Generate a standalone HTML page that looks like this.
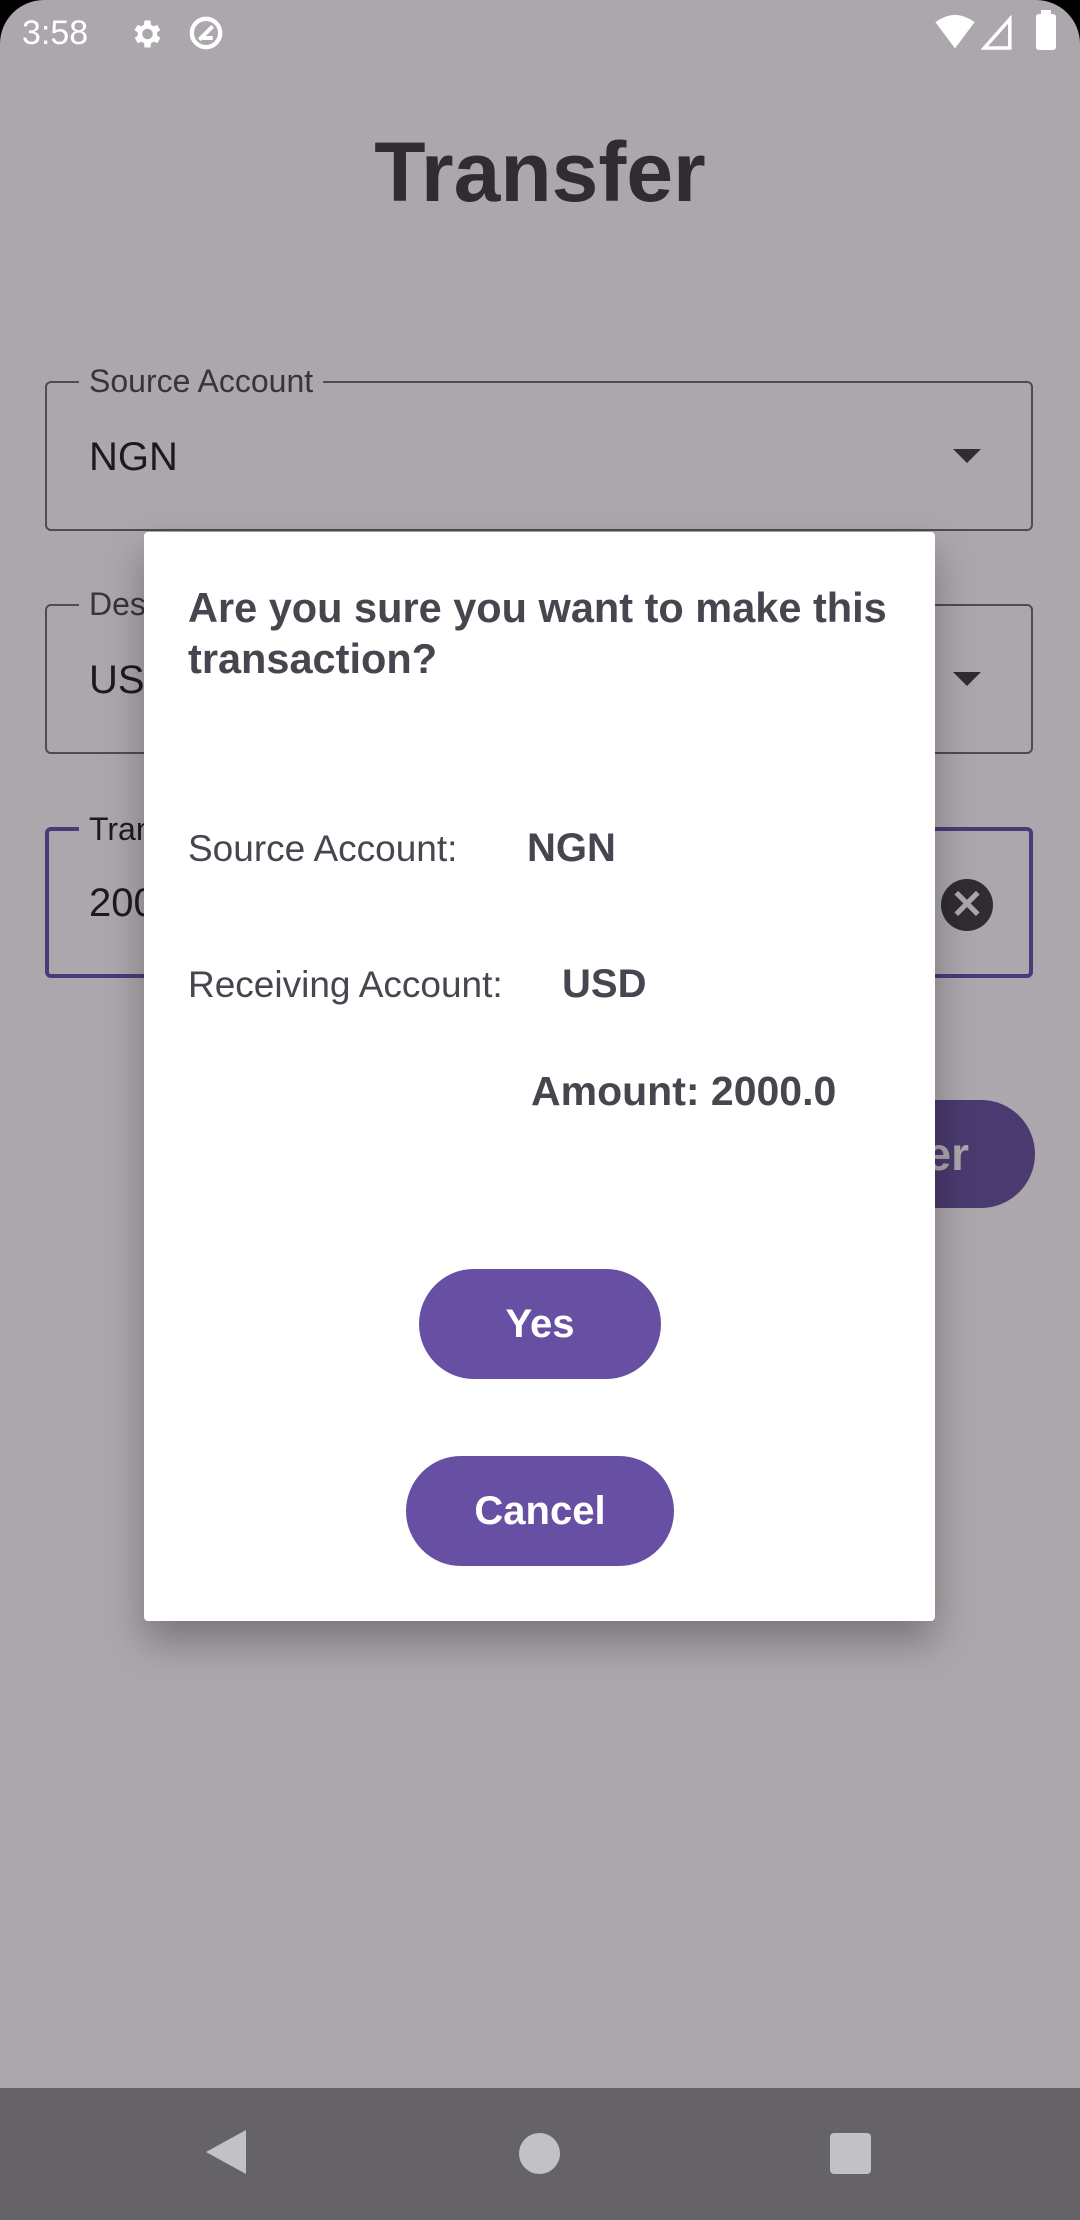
<!DOCTYPE html>
<html><head><meta charset="utf-8"><style>
html,body{margin:0;padding:0;}
body{width:1080px;height:2220px;position:relative;overflow:hidden;background:#000;font-family:"Liberation Sans",Roboto,sans-serif;}
.screen{position:absolute;left:0;top:0;width:1080px;height:2220px;background:#aca7ad;border-radius:44px 44px 0 0;overflow:hidden;}
.abs{position:absolute;}
.field{position:absolute;left:45px;width:988px;border:2px solid #4f4b53;border-radius:6px;box-sizing:border-box;}
.lbl{position:absolute;top:-21px;left:32px;padding:0 10px;background:#aca7ad;font-size:32px;color:#38343c;line-height:38px;}
.val{position:absolute;left:42px;font-size:40px;color:#1c1a1f;}
.arrow{position:absolute;right:50px;width:0;height:0;border-left:14px solid transparent;border-right:14px solid transparent;border-top:14px solid #2f2c33;}
.btn{position:absolute;background:#6750a4;color:#fff;font-weight:bold;font-size:40px;text-align:center;border-radius:60px;}
.dlg{position:absolute;left:144px;top:532px;width:791px;height:1089px;background:#fff;border-radius:4px;box-shadow:0 20px 40px rgba(0,0,0,0.3);}
.t{position:absolute;color:#49454f;}
</style></head><body>
<div class="screen">
  <div class="abs" style="left:22px;top:14px;font-size:34px;color:#fff;">3:58</div>
  <svg class="abs" style="left:128px;top:16px" width="36" height="36" viewBox="0 0 24 24"><path fill="#fff" d="M19.4 13a7.5 7.5 0 000-2l2.1-1.6-2-3.5-2.5 1a7 7 0 00-1.7-1L15 3h-4l-.4 2.9a7 7 0 00-1.7 1l-2.5-1-2 3.5L6.6 11a7.5 7.5 0 000 2l-2.1 1.6 2 3.5 2.5-1a7 7 0 001.7 1L11 21h4l.4-2.9a7 7 0 001.7-1l2.5 1 2-3.5zM13 15.5a3.5 3.5 0 110-7 3.5 3.5 0 010 7z"/></svg>
  <svg class="abs" style="left:186px;top:13px" width="40" height="40" viewBox="0 0 24 24"><circle cx="12" cy="12" r="8.5" fill="none" stroke="#fff" stroke-width="2.6"/><path d="M8 16L16 8M10 15h6" stroke="#fff" stroke-width="2.4" fill="none"/></svg>
  <svg class="abs" style="left:935px;top:14px" width="40" height="36" viewBox="0 0 24 22"><path fill="#fff" d="M12 21L0 5Q12-4 24 5z"/></svg>
  <svg class="abs" style="left:981px;top:14px" width="32" height="36" viewBox="0 0 20 22"><path fill="none" stroke="#fff" stroke-width="2.2" d="M2 21L18 3v18z"/></svg>
  <div class="abs" style="left:1036px;top:14px;width:20px;height:36px;background:#fff;border-radius:3px;"></div>
  <div class="abs" style="left:1041px;top:10px;width:10px;height:6px;background:#fff;"></div>

  <div class="abs" style="left:0;width:1080px;top:124px;text-align:center;font-size:84px;font-weight:bold;color:#2f2c33;">Transfer</div>

  <div class="field" style="top:381px;height:150px;"><div class="lbl">Source Account</div><div class="val" style="top:52px;">NGN</div><div class="arrow" style="top:66px;"></div></div>
  <div class="field" style="top:604px;height:150px;"><div class="lbl">Destination Account</div><div class="val" style="top:52px;">USD</div><div class="arrow" style="top:66px;"></div></div>
  <div class="field" style="top:827px;height:151px;border:4px solid #4a3a78;"><div class="lbl" style="left:30px;color:#1c1a1f;">Transfer Amount</div><div class="val" style="top:50px;left:40px;">2000.0</div>
    <div class="abs" style="right:36px;top:48px;width:52px;height:52px;border-radius:50%;background:#2f2c33;color:#aca7ad;font-size:40px;line-height:52px;text-align:center;font-weight:bold;">✕</div></div>
  <div class="btn" style="left:700px;top:1100px;width:335px;height:108px;line-height:108px;background:#4a3a70;color:#aca7ad;font-size:46px;text-align:right;"><span style="margin-right:66px;">Transfer</span></div>

  <div class="dlg">
    <div class="t" style="left:44px;top:50px;width:740px;font-size:41.5px;font-weight:bold;line-height:51px;">Are you sure you want to make this transaction?</div>
    <div class="t" style="left:44px;top:296px;font-size:37px;">Source Account:</div>
    <div class="t" style="left:383px;top:294px;font-size:40px;font-weight:bold;">NGN</div>
    <div class="t" style="left:44px;top:432px;font-size:37px;">Receiving Account:</div>
    <div class="t" style="left:418px;top:430px;font-size:40px;font-weight:bold;">USD</div>
    <div class="t" style="left:387px;top:536px;font-size:41px;font-weight:bold;">Amount: 2000.0</div>
    <div class="btn" style="left:275px;top:737px;width:242px;height:110px;line-height:110px;">Yes</div>
    <div class="btn" style="left:262px;top:924px;width:268px;height:110px;line-height:110px;">Cancel</div>
  </div>

  <div class="abs" style="left:0;top:2088px;width:1080px;height:132px;background:#656368;"></div>
  <svg class="abs" style="left:204px;top:2128px" width="44" height="48" viewBox="0 0 44 48"><path fill="#c2c2c4" d="M42 2v44L2 24z"/></svg>
  <div class="abs" style="left:519px;top:2133px;width:41px;height:41px;border-radius:50%;background:#c2c2c4;"></div>
  <div class="abs" style="left:830px;top:2133px;width:41px;height:41px;border-radius:4px;background:#c2c2c4;"></div>
</div>
</body></html>
